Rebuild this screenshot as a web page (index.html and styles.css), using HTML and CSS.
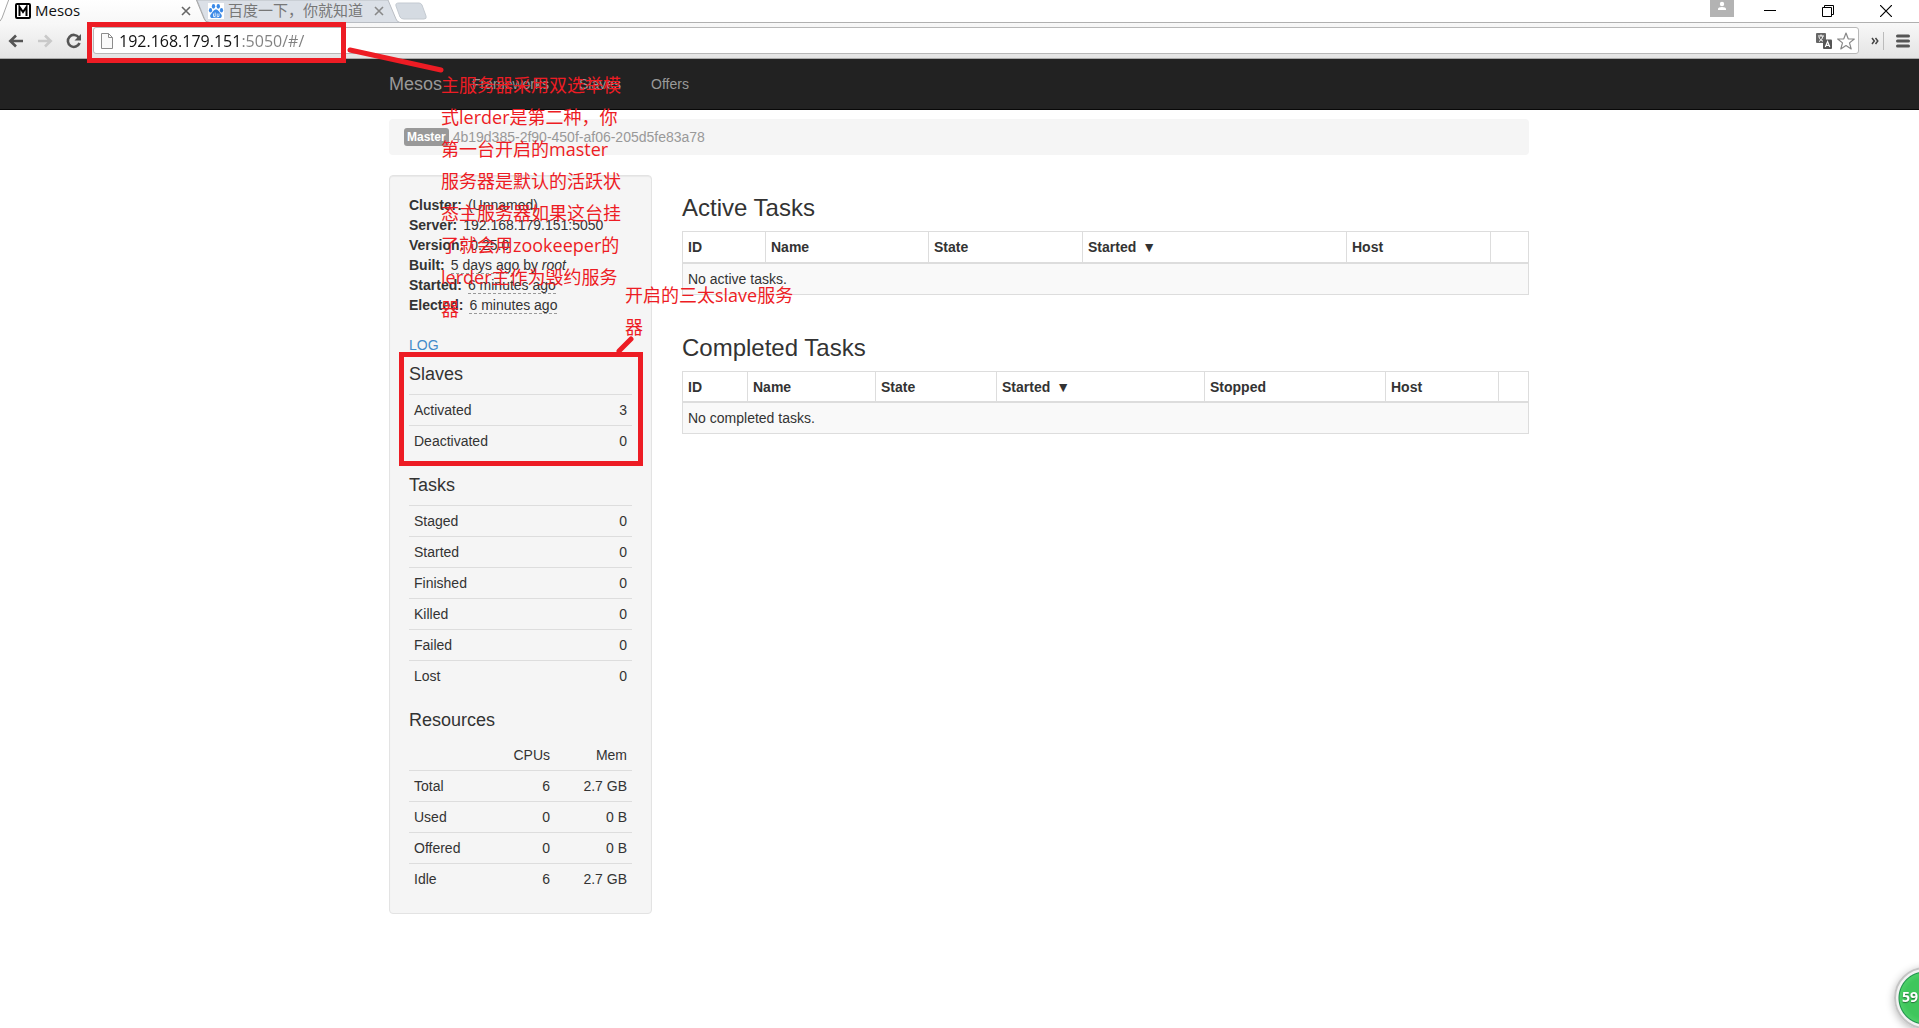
FILE: index.html
```html
<!DOCTYPE html>
<html lang="en">
<head>
<meta charset="utf-8">
<title>Mesos</title>
<link rel="stylesheet" href="styles.css">
</head>
<body>
<header class="browser">
  <div class="tab-strip">
    <div class="tabs">
      <svg class="tab-shapes" width="440" height="23" viewBox="0 0 440 23" aria-hidden="true">
        <defs><linearGradient id="tab" x1="0" y1="0" x2="0" y2="1"><stop offset="0" stop-color="#fff"/><stop offset="1" stop-color="#f7f7f7"/></linearGradient></defs>
        <path d="M197 0H388l8 19q1 3 4 3.500H206z" fill="#dbe0e7" stroke="#b9bdc3"/>
        <path d="M399 3h20q2 0 3 2l4 11q1 3-2 3h-20q-3 0-4-2l-4-11q-1-3 3-3z" fill="#d5dbe2" stroke="#c4cad1"/>
        <path d="M9-1L2 18q-1 4-6 4.500V24H210v-1.500q-5 0-6-4L196-1z" fill="url(#tab)" stroke="#a6a6a6"/>
      </svg>
      <div class="tab tab-active">
        <svg width="16" height="16" viewBox="0 0 16 16" aria-hidden="true"><rect x="1" y="1" width="14" height="14" rx="1" fill="#fff" stroke="#000" stroke-width="2"/><path d="M4.500 13V4L8 9l3.500-5v9" fill="none" stroke="#000" stroke-width="2"/></svg>
        <span class="tab-title">Mesos</span>
        <button class="tab-close" aria-label="Close tab"><svg width="10" height="10" viewBox="0 0 10 10"><path d="M1 1l8 8M9 1L1 9" stroke="#666" stroke-width="1.600"/></svg></button>
      </div>
      <div class="tab tab-idle">
        <svg width="16" height="16" viewBox="0 0 16 16" aria-hidden="true"><path d="M0 0h16v16H0z" fill="#fff"/><g fill="#3b8ae8"><ellipse cx="5.500" cy="3.300" rx="1.700" ry="2.400"/><ellipse cx="10.300" cy="3.300" rx="1.700" ry="2.400"/><ellipse cx="2.500" cy="7.300" rx="1.600" ry="2.200"/><ellipse cx="13.500" cy="7.300" rx="1.600" ry="2.200"/><path d="M8 6.500c2.500 0 3 2.500 4.800 4.200 2 2 .8 4.600-1.600 4.300-2-.3-4.200-.3-6.400 0-2.400.3-3.600-2.300-1.600-4.300C5 9 5.500 6.500 8 6.500z"/></g><path d="M5.500 10.500v3h1.700v-4M9.200 10.500v3h1.800v-3" fill="none" stroke="#fff" stroke-width=".8"/></svg>
        <span class="tab-title">百度一下，你就知道</span>
        <button class="tab-close" aria-label="Close tab"><svg width="10" height="10" viewBox="0 0 10 10"><path d="M1 1l8 8M9 1L1 9" stroke="#888" stroke-width="1.600"/></svg></button>
      </div>
    </div>
    <div class="window-buttons">
      <button class="profile" aria-label="Profile"><svg width="24" height="17" viewBox="0 0 24 17"><circle cx="12" cy="4" r="2.200" fill="#fff"/><path d="M8 10V9q0-2 4-2t4 2v1z" fill="#fff"/></svg></button>
      <button aria-label="Minimise"><svg width="12" height="12" viewBox="0 0 12 12"><path d="M0 5.500h12" stroke="#000"/></svg></button>
      <button aria-label="Restore"><svg width="12" height="12" viewBox="0 0 12 12"><path d="M.5 2.500h9v9h-9zM2.500 2.500v-2h9v9h-2" fill="none" stroke="#000"/></svg></button>
      <button aria-label="Close"><svg width="12" height="12" viewBox="0 0 12 12"><path d="M0 0l12 12M12 0L0 12" stroke="#000" stroke-width="1.200"/></svg></button>
    </div>
  </div>
  <div class="toolbar">
    <div class="nav-buttons">
      <button aria-label="Back"><svg width="16" height="14" viewBox="0 0 16 14"><path d="M15 7H3M8 1.500L2.300 7 8 12.500" fill="none" stroke="#555" stroke-width="2.600"/></svg></button>
      <button aria-label="Forward"><svg width="16" height="14" viewBox="0 0 16 14"><path d="M1 7h12M8 1.500L13.700 7 8 12.500" fill="none" stroke="#c9c9c9" stroke-width="2.600"/></svg></button>
      <button aria-label="Reload"><svg width="16" height="16" viewBox="0 0 16 16"><path d="M12.800 4.500A6 6 0 1 0 13.500 10" fill="none" stroke="#555" stroke-width="2.600"/><path d="M15 1v6.500H8.500z" fill="#555"/></svg></button>
    </div>
    <div class="omnibox">
      <svg width="12" height="16" viewBox="0 0 12 16" aria-hidden="true"><path d="M.5.500h7l4 4v11H.5zM7.500.500v4h4" fill="#fafafa" stroke="#8c8c8c"/></svg>
      <input class="url" type="text" aria-label="Address" value="192.168.179.151:5050/#/">
      <button aria-label="Translate"><svg width="16" height="16" viewBox="0 0 16 16"><rect width="10" height="10" rx="1" fill="#666"/><path d="M2 3h6M5 1.500V3M3 8.500c2-1 3.500-3 3.800-5.200M3 4c.5 2 2 3.500 4.200 4.300" stroke="#fff" fill="none"/><path d="M7 11V7.500a1 1 0 0 1 1-1H15a1 1 0 0 1 1 1V15a1 1 0 0 1-1 1H8a1 1 0 0 1-1-1z" fill="#555"/><path d="M9.300 14l2.300-5.500L13.800 14M10.300 12.300h2.700" stroke="#fff" fill="none" stroke-width="1.200"/></svg></button>
      <button aria-label="Bookmark"><svg width="18" height="18" viewBox="0 0 18 18"><path d="M9 1l2.200 5.800 6.100.2-4.800 3.900 1.700 6L9 13.500 3.800 16.900l1.700-6L.7 7l6.100-.2z" fill="#fff" stroke="#888" stroke-width="1.200" stroke-linejoin="round"/></svg></button>
    </div>
    <button class="more" aria-label="More extensions"><svg width="8" height="8" viewBox="0 0 8 8"><path d="M1 1l2.300 3L1 7M4.500 1l2.300 3-2.300 3" fill="none" stroke="#444" stroke-width="1.500"/></svg></button>
    <button class="menu" aria-label="Menu"><svg width="14" height="14" viewBox="0 0 14 14"><path d="M1.500 2h11M1.500 7h11M1.500 12h11" stroke="#555" stroke-width="3" stroke-linecap="round"/></svg></button>
  </div>
</header>

<nav class="navbar">
  <div class="container navbar-inner">
    <a class="brand" href="#">Mesos</a>
    <a href="#frameworks">Frameworks</a>
    <a href="#slaves">Slaves</a>
    <a href="#offers">Offers</a>
  </div>
</nav>

<main class="container">
  <div class="breadcrumb"><span class="label">Master</span><span>4b19d385-2f90-450f-af06-205d5fe83a78</span></div>
  <div class="columns">
    <aside class="well">
      <dl class="facts">
        <div><dt>Cluster:</dt><dd>(Unnamed)</dd></div>
        <div><dt>Server:</dt><dd>192.168.179.151:5050</dd></div>
        <div><dt>Version:</dt><dd>0.25.0</dd></div>
        <div><dt>Built:</dt><dd><span class="ago">5 days ago</span> by <i>root</i></dd></div>
        <div><dt>Started:</dt><dd><span class="ago">6 minutes ago</span></dd></div>
        <div><dt>Elected:</dt><dd><span class="ago">6 minutes ago</span></dd></div>
      </dl>
      <a class="log" href="#log">LOG</a>
      <h4>Slaves</h4>
      <table class="stats">
        <tr><td>Activated</td><td>3</td></tr>
        <tr><td>Deactivated</td><td>0</td></tr>
      </table>
      <h4>Tasks</h4>
      <table class="stats">
        <tr><td>Staged</td><td>0</td></tr>
        <tr><td>Started</td><td>0</td></tr>
        <tr><td>Finished</td><td>0</td></tr>
        <tr><td>Killed</td><td>0</td></tr>
        <tr><td>Failed</td><td>0</td></tr>
        <tr><td>Lost</td><td>0</td></tr>
      </table>
      <h4>Resources</h4>
      <table class="stats resources">
        <thead><tr><td></td><td>CPUs</td><td>Mem</td></tr></thead>
        <tbody>
        <tr><td>Total</td><td>6</td><td>2.7 GB</td></tr>
        <tr><td>Used</td><td>0</td><td>0 B</td></tr>
        <tr><td>Offered</td><td>0</td><td>0 B</td></tr>
        <tr><td>Idle</td><td>6</td><td>2.7 GB</td></tr>
        </tbody>
      </table>
    </aside>
    <section class="tasks">
      <h3>Active Tasks</h3>
      <table class="grid">
        <colgroup><col class="a1"><col class="a2"><col class="a3"><col class="a4"><col class="a5"><col class="a6"></colgroup>
        <thead><tr><th>ID</th><th>Name</th><th>State</th><th>Started <span class="sort">▼</span></th><th>Host</th><th></th></tr></thead>
        <tbody><tr><td colspan="6">No active tasks.</td></tr></tbody>
      </table>
      <h3>Completed Tasks</h3>
      <table class="grid">
        <colgroup><col class="c1"><col class="c2"><col class="c3"><col class="c4"><col class="c5"><col class="c6"><col class="c7"></colgroup>
        <thead><tr><th>ID</th><th>Name</th><th>State</th><th>Started <span class="sort">▼</span></th><th>Stopped</th><th>Host</th><th></th></tr></thead>
        <tbody><tr><td colspan="7">No completed tasks.</td></tr></tbody>
      </table>
    </section>
  </div>
</main>

<div class="mark mark-address"></div>
<div class="mark mark-slaves"></div>
<svg class="pointers" width="660" height="370" viewBox="0 0 660 370" aria-hidden="true"><path d="M350 50l91 20M619 351l12-12" stroke="#ed1c24" stroke-width="5" stroke-linecap="round"/></svg>
<p class="note note-master">主服务器采用双选举模<br>式lerder是第二种，你<br>第一台开启的master<br>服务器是默认的活跃状<br>态主服务器如果这台挂<br>了就会用zookeeper的<br>lerder主作为毁约服务<br>器</p>
<p class="note note-slaves">开启的三太slave服务<br>器</p>
<div class="gauge">59</div>
</body>
</html>
```
FILE: styles.css
```css
* { box-sizing: border-box; }
body {
  margin: 0;
  min-height: 100vh;
  position: relative;
  background: #fff;
  color: #333;
  font: 14px/20px "Liberation Sans", Arial, sans-serif;
}
a { color: #428bca; text-decoration: none; }
svg { display: block; }
button { display: flex; padding: 0; border: 0; background: none; }

/* browser frame */
.browser { font-family: "Open Sans", "Noto Sans CJK SC", sans-serif; }
.tab-strip {
  display: flex;
  justify-content: space-between;
  height: 23px;
  border-bottom: 1px solid #b0b0b0;
}
.tabs { display: flex; position: relative; height: 23px; }
.tab-shapes { position: absolute; left: 0; top: 0; }
.tab { display: flex; align-items: center; gap: 4px; position: relative; height: 22px; font-size: 15px; }
.tab-active { width: 208px; padding: 0 17px 0 15px; color: #111; }
.tab-idle { width: 192px; padding-right: 16px; color: #777; }
.tab-title { flex: 1; padding-bottom: 2px; white-space: nowrap; }
.window-buttons { display: flex; align-items: center; gap: 46px; padding-right: 27px; }
.profile { align-self: flex-start; margin-right: -16px; background: #b3b3b3; }
.toolbar {
  display: flex;
  align-items: center;
  height: 36px;
  padding: 0 9px 0 8px;
  background: linear-gradient(#f8f8f8, #e4e4e4);
  border-bottom: 1px solid #aaa;
}
.nav-buttons { display: flex; align-items: center; gap: 13px; width: 85px; }
.omnibox {
  display: flex;
  align-items: center;
  gap: 5px;
  flex: 1;
  height: 27px;
  padding: 0 3px 0 7px;
  background: #fff;
  border: 1px solid #b8b8b8;
  border-radius: 3px;
}
.url {
  flex: 1;
  padding: 0 0 0 1px;
  border: 0;
  font: 16px/22px "Open Sans", sans-serif;
  color: transparent;
  background: linear-gradient(90deg, #111 124px, #808080 124px);
  -webkit-background-clip: text;
  background-clip: text;
}
.more { height: 18px; align-items: center; margin-left: 12px; padding-right: 4px; border-right: 1px solid #bbb; }
.menu { margin-left: 12px; }

/* page */
.container { width: calc(100% - 30px); max-width: 1141px; margin: 0 auto; padding-right: 1px; }
.navbar { background: #222; border-bottom: 1px solid #080808; }
.navbar-inner { display: flex; align-items: center; gap: 30px; height: 50px; }
.navbar a { color: #999; }
.navbar .brand { font-size: 18px; }
.breadcrumb {
  display: flex;
  align-items: center;
  gap: 4px;
  margin: 9px 0 20px;
  padding: 8px 15px;
  border-radius: 4px;
  background: #f5f5f5;
  color: #999;
}
.label {
  padding: 0 3px;
  border-radius: 3px;
  background: #999;
  color: #fff;
  font: bold 12px/18px "Liberation Sans", Arial, sans-serif;
}
.columns { display: flex; gap: 30px; align-items: flex-start; }
.well {
  flex: 0 0 263px;
  padding: 19px;
  background: #f5f5f5;
  border: 1px solid #e3e3e3;
  border-radius: 4px;
  box-shadow: inset 0 1px 1px rgba(0, 0, 0, .05);
}
.facts { margin: 0 0 20px; }
.facts div { display: flex; gap: 6px; }
.facts dt { font-weight: bold; }
.facts dd { margin: 0; }
.ago { border-bottom: 1px dashed #999; }
.log { display: block; }
h3, h4 { font-weight: normal; }
h4 { margin: 10px 0; font-size: 18px; line-height: 19px; }
.stats { width: 100%; margin-bottom: 20px; border-spacing: 0; }
.stats:last-child { margin-bottom: 0; }
.stats td { height: 31px; padding: 5px; border-top: 1px solid #ddd; text-align: right; }
.stats td:first-child { text-align: left; }
.stats thead td { height: 30px; border-top: 0; }
.resources td:last-child { width: 77px; }
.stats + h4 { margin-top: 20px; }
.tasks { display: flex; flex-direction: column; flex: 1; min-width: 0; }
h3 { margin: 20px 0 10px; font-size: 24px; line-height: 26px; }
.grid { width: 100%; margin-bottom: 20px; table-layout: fixed; border-collapse: collapse; border: 1px solid #ddd; }
.grid th { height: 31px; padding: 5px 5px 4px; text-align: left; border: 1px solid #ddd; border-bottom-width: 2px; }
.grid td { padding: 5px; background: #f9f9f9; }
.sort { margin-left: 2px; }
.a1 { width: 83px; } .a2 { width: 163px; } .a3 { width: 154px; }
.a4 { width: 264px; } .a5 { width: 144px; } .a6 { width: 38px; }
.c1 { width: 65px; } .c2 { width: 128px; } .c3 { width: 121px; } .c4 { width: 208px; }
.c5 { width: 181px; } .c6 { width: 113px; } .c7 { width: 30px; }

/* hand-drawn remarks over the page */
.mark { position: absolute; border: 5px solid #ed1c24; }
.mark-address { left: 87px; top: 22px; width: 259px; height: 41px; }
.mark-slaves { left: 399px; top: 352px; width: 244px; height: 114px; }
.pointers { position: absolute; left: 0; top: 0; pointer-events: none; }
.note {
  position: absolute;
  margin: 0;
  color: #ed1c24;
  font: 18px/32px "Open Sans", "Noto Sans CJK SC", sans-serif;
  white-space: nowrap;
}
.note-master { left: 441px; top: 69px; }
.note-slaves { left: 625px; top: 279px; }
.gauge {
  position: fixed;
  right: -37px;
  bottom: -1px;
  width: 62px;
  height: 62px;
  padding-left: 6px;
  border: 2px solid #c4c4c4;
  border-radius: 50%;
  background: radial-gradient(circle, #3fc65c 0 20px, #4bcf66 25px, #1f8f4c 26px, #f2f2f2 27px);
  box-shadow: 0 2px 8px rgba(0, 0, 0, .3);
  color: #fff;
  font: bold 14px/56px "Open Sans", sans-serif;
  text-shadow: 0 1px 1px #26703a;
}
```
